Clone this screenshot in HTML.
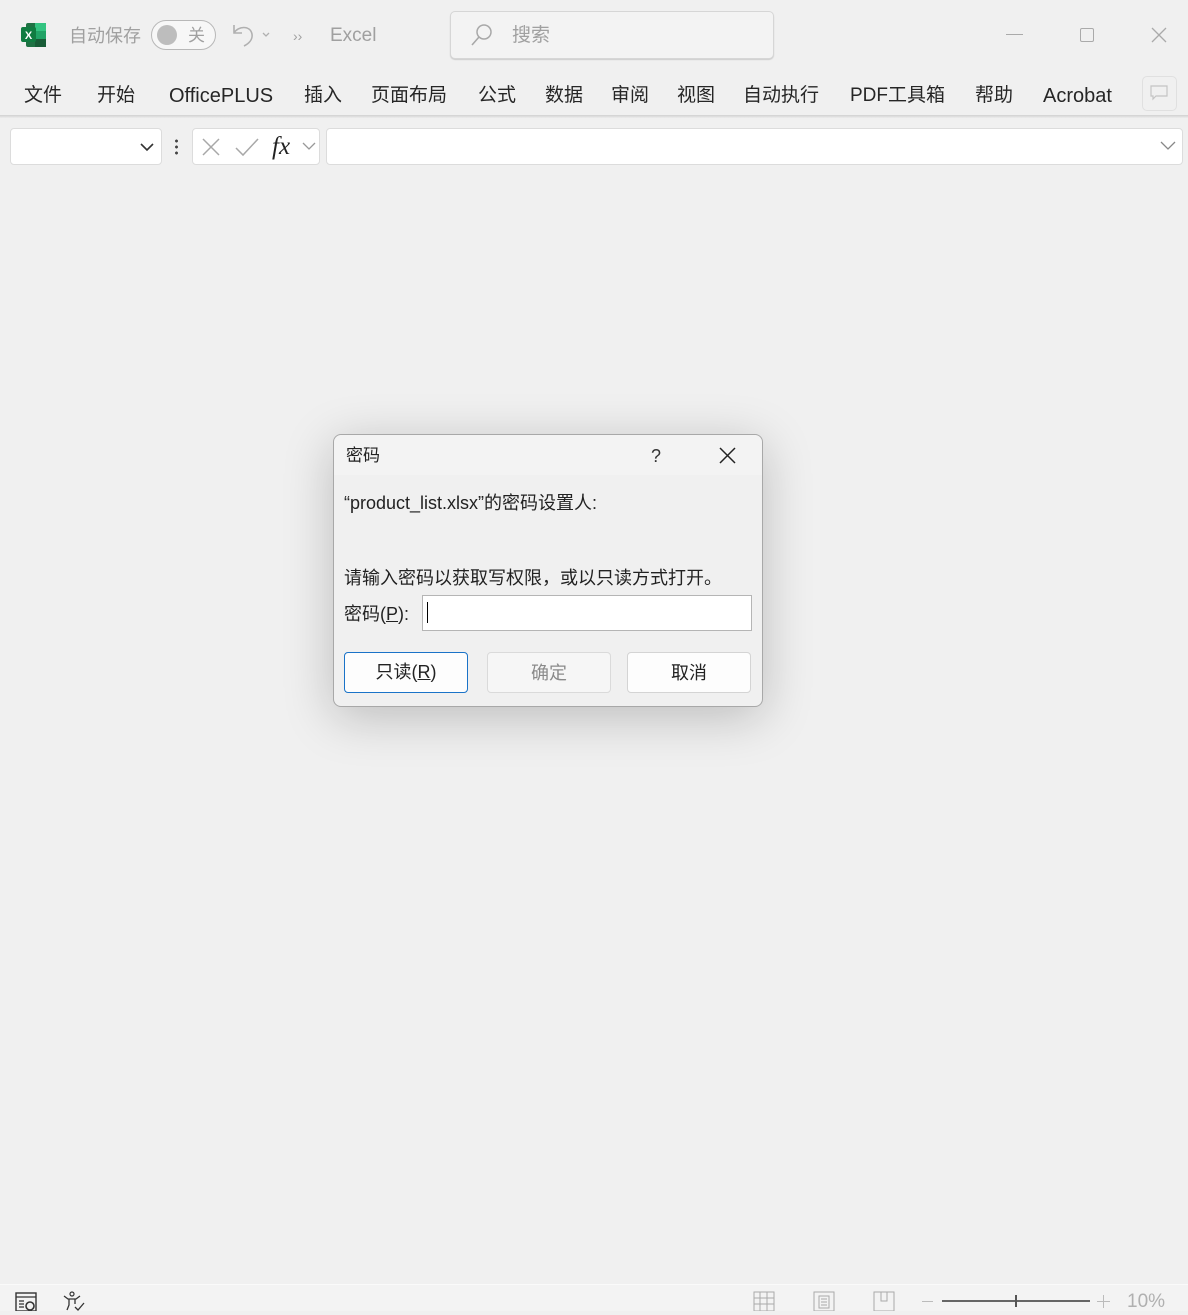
<!DOCTYPE html>
<html><head><meta charset="utf-8"><style>
*{margin:0;padding:0;box-sizing:border-box}
body{width:1188px;height:1311px;background:#f0f0f0;font-family:"Liberation Sans","Noto Sans CJK SC",sans-serif;position:relative;overflow:hidden;color:#222}
.a{position:absolute;white-space:nowrap}
.tab{position:absolute;top:82px;font-size:19px;line-height:28px;height:28px;color:#262626}
.gray{color:#a0a0a0}
</style></head><body>
<svg class="a" style="left:21px;top:22px" width="26" height="26" viewBox="0 0 26 26">
<rect x="5" y="1" width="20" height="24" rx="2" fill="#1f7244"/>
<rect x="14" y="1" width="11" height="8" fill="#33c481"/>
<rect x="14" y="9" width="11" height="8" fill="#21a366"/>
<rect x="14" y="17" width="11" height="8" fill="#185c37"/>
<rect x="0" y="5" width="15" height="15" rx="2" fill="#107c41"/>
<text x="7.5" y="17" font-size="11" font-weight="bold" fill="#fff" text-anchor="middle" font-family="Liberation Sans">X</text>
</svg>
<div class="a gray" style="left:69px;top:22px;font-size:18px;line-height:28px">自动保存</div>
<div class="a" style="left:151px;top:20px;width:65px;height:30px;border:1.5px solid #b8b8b8;border-radius:15px;background:#f7f7f7"></div>
<div class="a" style="left:157px;top:25px;width:20px;height:20px;border-radius:10px;background:#bdbdbd"></div>
<div class="a gray" style="left:188px;top:22px;font-size:17px;line-height:28px">关</div>
<svg class="a" style="left:230px;top:22px" width="46" height="26" viewBox="0 0 46 26"><path d="M4 3v8h8M4 11C8 4 20 3 22 12c1 6-4 10-8 12" fill="none" stroke="#b0b0b0" stroke-width="1.6"/><path d="M33 11l3 3 3-3" fill="none" stroke="#b0b0b0" stroke-width="1.3"/></svg>
<div class="a gray" style="left:293px;top:25px;font-size:14px;line-height:22px">››</div>
<div class="a gray" style="left:330px;top:22px;font-size:19px;line-height:28px">Excel</div>
<div class="a" style="left:450px;top:11px;width:324px;height:48px;border:1px solid #d6d6d6;border-radius:5px;background:#f3f3f3;box-shadow:0 1px 1px #ccc"></div>
<svg class="a" style="left:470px;top:23px" width="24" height="24" viewBox="0 0 24 24"><circle cx="14" cy="9" r="7" fill="none" stroke="#a8a8a8" stroke-width="1.5"/><path d="M9 14L2 22" stroke="#a8a8a8" stroke-width="1.6"/></svg>
<div class="a gray" style="left:512px;top:22px;font-size:19px;line-height:28px">搜索</div>
<div class="a" style="left:1006px;top:34px;width:17px;height:1px;background:#aaa"></div>
<div class="a" style="left:1080px;top:28px;width:14px;height:14px;border:1.3px solid #aaa;border-radius:2px"></div>
<svg class="a" style="left:1151px;top:27px" width="16" height="16"><path d="M1 1L15 15M15 1L1 15" stroke="#aaa" stroke-width="1.3"/></svg>
<div class="tab" style="left:24px">文件</div>
<div class="tab" style="left:97px">开始</div>
<div class="tab" style="left:169px;font-size:20px">OfficePLUS</div>
<div class="tab" style="left:304px">插入</div>
<div class="tab" style="left:371px">页面布局</div>
<div class="tab" style="left:478px">公式</div>
<div class="tab" style="left:545px">数据</div>
<div class="tab" style="left:611px">审阅</div>
<div class="tab" style="left:677px">视图</div>
<div class="tab" style="left:743px">自动执行</div>
<div class="tab" style="left:850px">PDF工具箱</div>
<div class="tab" style="left:975px">帮助</div>
<div class="tab" style="left:1043px;font-size:20px">Acrobat</div>
<div class="a" style="left:1142px;top:76px;width:35px;height:35px;border:1px solid #e0e0e0;border-radius:5px"></div>
<svg class="a" style="left:1150px;top:85px" width="18" height="16"><path d="M1 1h16v10H6l-3 3v-3H1z" fill="none" stroke="#c4c4c4" stroke-width="1.2"/></svg>
<div class="a" style="left:0;top:115px;width:1188px;height:3px;background:linear-gradient(#d0d0d0,#ececec)"></div>
<div class="a" style="left:10px;top:128px;width:152px;height:37px;background:#fff;border:1px solid #dcdcdc;border-radius:4px"></div>
<svg class="a" style="left:139px;top:141px" width="16" height="12"><path d="M2 3l6 6 6-6" fill="none" stroke="#333" stroke-width="1.6"/></svg>
<div class="a" style="left:175px;top:138px;width:3px;height:17px;background:radial-gradient(circle,#444 1.3px,transparent 1.6px) 0 0/3px 6px"></div>
<div class="a" style="left:192px;top:128px;width:128px;height:37px;background:#fff;border:1px solid #dcdcdc;border-radius:4px"></div>
<svg class="a" style="left:201px;top:137px" width="20" height="20"><path d="M2 2L18 18M18 2L2 18" stroke="#a8a8a8" stroke-width="1.5"/></svg>
<svg class="a" style="left:234px;top:137px" width="26" height="20"><path d="M2 11l7 7L24 2" fill="none" stroke="#a8a8a8" stroke-width="1.5"/></svg>
<div class="a" style="left:272px;top:133px;font-family:'Liberation Serif',serif;font-style:italic;font-size:25px;line-height:28px;color:#222">fx</div>
<svg class="a" style="left:302px;top:141px" width="14" height="10"><path d="M1 2l6 6 6-6" fill="none" stroke="#999" stroke-width="1.3"/></svg>
<div class="a" style="left:326px;top:128px;width:857px;height:37px;background:#fff;border:1px solid #dcdcdc;border-radius:4px"></div>
<svg class="a" style="left:1160px;top:141px" width="16" height="10"><path d="M1 1l7 7 7-7" fill="none" stroke="#888" stroke-width="1.3"/></svg>
<div class="a" style="left:333px;top:434px;width:430px;height:273px;background:#f0f0f0;border:1px solid #a8a8a8;border-radius:8px;box-shadow:0 10px 50px rgba(0,0,0,0.22)"></div>
<div class="a" style="left:334px;top:435px;width:428px;height:40px;background:#f3f3f3;border-radius:8px 8px 0 0"></div>
<div class="a" style="left:346px;top:443px;font-size:17px;line-height:26px">密码</div>
<div class="a" style="left:651px;top:443px;font-size:18px;line-height:26px;color:#333">?</div>
<svg class="a" style="left:719px;top:447px" width="17" height="17"><path d="M1 1L16 16M16 1L1 16" stroke="#222" stroke-width="1.5"/></svg>
<div class="a" style="left:344px;top:490px;font-size:18px;line-height:26px">“product_list.xlsx”的密码设置人:</div>
<div class="a" style="left:344px;top:565px;font-size:18px;line-height:26px">请输入密码以获取写权限，或以只读方式打开。</div>
<div class="a" style="left:344px;top:601px;font-size:18px;line-height:26px">密码(<u>P</u>):</div>
<div class="a" style="left:422px;top:595px;width:330px;height:36px;background:#fff;border:1px solid #b5b5b5"></div>
<div class="a" style="left:427px;top:602px;width:1px;height:21px;background:#000"></div>
<div class="a" style="left:344px;top:652px;width:124px;height:41px;background:#fdfdfd;border:1.5px solid #1a73c8;border-radius:4px;text-align:center;line-height:39px;font-size:18px">只读(<u>R</u>)</div>
<div class="a" style="left:487px;top:652px;width:124px;height:41px;background:#f6f6f6;border:1px solid #dadada;border-radius:4px;text-align:center;line-height:40px;font-size:18px;color:#8a8a8a">确定</div>
<div class="a" style="left:627px;top:652px;width:124px;height:41px;background:#fdfdfd;border:1px solid #d4d4d4;border-radius:4px;text-align:center;line-height:40px;font-size:18px">取消</div>
<div class="a" style="left:0;top:1284px;width:1188px;height:27px;background:#f3f3f3;border-top:1px solid #fafafa"></div>
<svg class="a" style="left:15px;top:1292px" width="24" height="19"><rect x="1" y="1" width="20" height="18" fill="none" stroke="#333" stroke-width="1.4"/><path d="M1 5h20M4 9h5M4 12h5M4 15h5" stroke="#333" stroke-width="1.3"/><circle cx="15" cy="14" r="4" fill="none" stroke="#333" stroke-width="1.6"/></svg>
<svg class="a" style="left:61px;top:1291px" width="26" height="20"><circle cx="11" cy="3" r="2" fill="none" stroke="#333" stroke-width="1.2"/><path d="M3 5l4 3h8l4-3M8 8v6l-2 5M14 8v5M14 16l3 3 6-7" fill="none" stroke="#333" stroke-width="1.3"/></svg>
<svg class="a" style="left:753px;top:1291px" width="22" height="20"><rect x="1" y="1" width="20" height="19" fill="none" stroke="#aaa"/><path d="M7 1v19M14 1v19M1 7h20M1 13h20" stroke="#aaa"/></svg>
<svg class="a" style="left:813px;top:1291px" width="22" height="20"><rect x="1" y="1" width="20" height="19" fill="none" stroke="#aaa"/><rect x="6" y="5" width="10" height="12" fill="none" stroke="#aaa"/><path d="M8 8h6M8 11h6M8 14h6" stroke="#aaa"/></svg>
<svg class="a" style="left:873px;top:1291px" width="22" height="20"><rect x="1" y="1" width="20" height="19" fill="none" stroke="#aaa"/><path d="M8 1v9h6V1" fill="none" stroke="#aaa"/></svg>
<div class="a" style="left:922px;top:1301px;width:11px;height:1px;background:#bbb"></div>
<div class="a" style="left:942px;top:1300px;width:148px;height:2px;background:#666"></div>
<div class="a" style="left:1015px;top:1295px;width:2px;height:12px;background:#555"></div>
<div class="a" style="left:1097px;top:1301px;width:13px;height:1px;background:#bbb"></div>
<div class="a" style="left:1103px;top:1295px;width:1px;height:13px;background:#bbb"></div>
<div class="a" style="left:1127px;top:1289px;font-size:19px;line-height:26px;color:#b0b0b0">10%</div>
</body></html>
